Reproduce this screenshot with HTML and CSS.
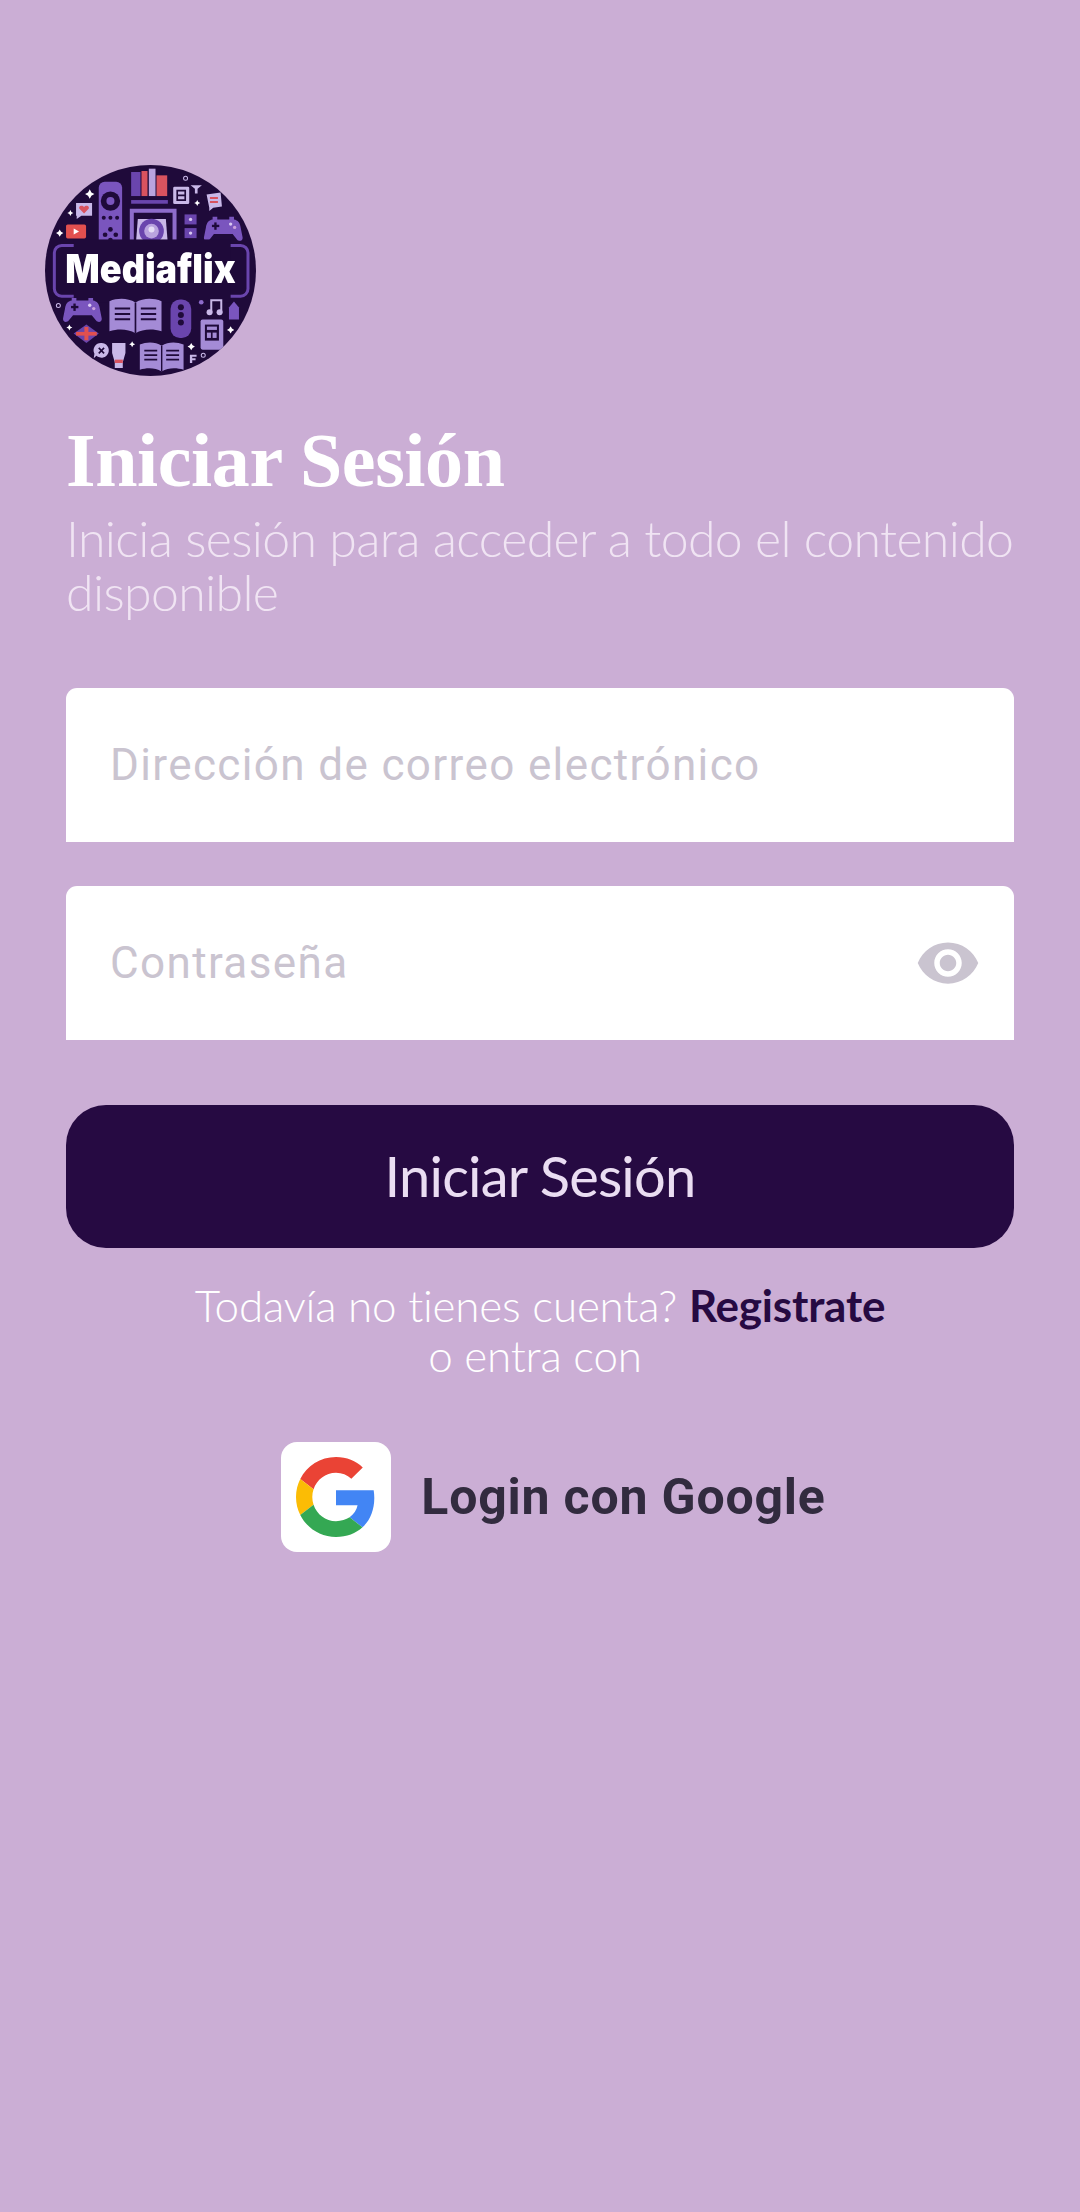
FILE: index.html
```html
<!DOCTYPE html>
<html lang="es">
<head>
  <meta charset="UTF-8" />
  <meta name="viewport" content="width=device-width, initial-scale=1.0"/>
  <title>Iniciar Sesión</title>
  <link rel="stylesheet" href="styles.css">
</head>
<body>

<main class="screen">
  <svg class="logo" viewBox="44 47 632 632" xmlns="http://www.w3.org/2000/svg" role="img" aria-label="Mediaflix">
    <defs>
      <clipPath id="disc"><circle cx="360" cy="363" r="316"/></clipPath>
      <g id="pad">
        <path d="M18 0h14v8h36V0h14v8c12 2 18 10 20 24l6 30c1 10-10 14-17 6L78 52H22L9 68c-7 8-18 4-17-6l6-30C0 18 6 10 18 8z" fill="#7a55be"/>
        <rect x="16" y="24" width="22" height="7" fill="#1f0a3a"/>
        <rect x="23" y="17" width="7" height="22" fill="#1f0a3a"/>
        <circle cx="72" cy="22" r="5" fill="#d9c9f2"/>
        <circle cx="84" cy="32" r="5" fill="#c9a0dc"/>
      </g>
      <g id="book">
        <path d="M0 8c25-10 55-10 78 4 23-14 53-14 78-4v90c-25-8-55-8-78 6-23-14-53-14-78-6z" fill="#a48bd6"/>
        <path d="M16 30h46M16 46h46M16 62h46M94 30h46M94 46h46M94 62h46" stroke="#1f0a3a" stroke-width="6" fill="none"/>
        <path d="M78 12v92" stroke="#1f0a3a" stroke-width="5"/>
      </g>
    </defs>
    <g clip-path="url(#disc)">
      <rect x="44" y="47" width="632" height="632" fill="#1f0a3a"/>

      <!-- fila de arriba -->
      <rect x="302" y="68" width="28" height="72" fill="#6a45ad"/>
      <rect x="333" y="65" width="18" height="75" fill="#d9535f"/>
      <rect x="355" y="58" width="20" height="82" fill="#b9a3de"/>
      <rect x="378" y="78" width="32" height="62" fill="#d9535f"/>
      <rect x="302" y="152" width="110" height="11" fill="#6a45ad"/>
      <rect x="428" y="112" width="48" height="52" rx="4" fill="#c9b8e8"/>
      <path d="M440 124h24v28h-24zM440 138h24" fill="none" stroke="#1f0a3a" stroke-width="5"/>
      <path d="M528 135l42-6 4 42-26 4-12 10v-10z" fill="#c9b8e8"/>
      <path d="M538 146h24M538 158h24" stroke="#d9535f" stroke-width="6"/>
      <circle cx="465" cy="87" r="6" fill="none" stroke="#c9b8e8" stroke-width="3"/>
      <path d="M480 108h34l-13 10v14h-8v-14z" fill="#c9b8e8"/>

      <!-- mando -->
      <rect x="205" y="97" width="70" height="196" rx="18" fill="#7a55be"/>
      <circle cx="240" cy="155" r="29" fill="#1f0a3a"/>
      <circle cx="240" cy="155" r="12" fill="#7a55be"/>
      <circle cx="220" cy="205" r="6" fill="#1f0a3a"/>
      <circle cx="240" cy="205" r="6" fill="#1f0a3a"/>
      <circle cx="260" cy="205" r="6" fill="#1f0a3a"/>
      <circle cx="240" cy="240" r="7" fill="#1f0a3a"/>
      <circle cx="240" cy="272" r="7" fill="#1f0a3a"/>
      <circle cx="224" cy="256" r="7" fill="#1f0a3a"/>
      <circle cx="256" cy="256" r="7" fill="#1f0a3a"/>

      <!-- proyector -->
      <path d="M298 285V178h140v107h-12V190H310v95z" fill="#8e6ccb"/>
      <path d="M316 285l6-76h84l6 76z" fill="#c9b8e8"/>
      <circle cx="363" cy="245" r="37" fill="#6a45ad"/>
      <circle cx="363" cy="245" r="22" fill="#b9a3de"/>
      <circle cx="363" cy="240" r="9" fill="#e4dcf5"/>

      <!-- iconos laterales -->
      <path d="M137 161h48v38h-32l-14 10v-10h-2z" fill="#c9b8e8"/>
      <path d="M161 192l-13-13c-6-8 7-15 13-6 6-9 19-2 13 6z" fill="#d9535f"/>
      <rect x="107" y="225" width="60" height="42" rx="5" fill="#e2504f"/>
      <path d="M130 237l16 9-16 9z" fill="#fff"/>
      <rect x="462" y="195" width="36" height="30" fill="#6a45ad"/>
      <rect x="462" y="236" width="36" height="30" fill="#6a45ad"/>
      <circle cx="480" cy="210" r="5" fill="#d9c9f2"/>
      <circle cx="480" cy="251" r="5" fill="#d9c9f2"/>
      <use href="#pad" transform="translate(528 202)"/>
      <path d="M178 120l5 9 9 5-9 5-5 9-5-9-9-5 9-5zM88 240l4 7 7 4-7 4-4 7-4-7-7-4 7-4zM120 182l3 6 6 3-6 3-3 6-3-6-6-3 6-3zM500 152l3 6 6 3-6 3-3 6-3-6-6-3 6-3z" fill="#fff"/>

      <!-- marco del nombre -->
      <rect x="72" y="288" width="580" height="152" rx="22" fill="#1f0a3a" stroke="#6a45ad" stroke-width="9"/>
      <rect x="130" y="270" width="470" height="190" fill="#1f0a3a"/>
      <text class="logo-name" x="105" y="401" textLength="510" lengthAdjust="spacingAndGlyphs">Mediaflix</text>

      <!-- fila de abajo -->
      <use href="#pad" transform="translate(106 445)"/>
      <use href="#book" transform="translate(237 447)"/>
      <rect x="420" y="450" width="62" height="115" rx="28" fill="#6a45ad"/>
      <circle cx="451" cy="473" r="9" fill="#1f0a3a"/>
      <circle cx="451" cy="496" r="9" fill="#1f0a3a"/>
      <circle cx="451" cy="519" r="9" fill="#1f0a3a"/>
      <path d="M542 488v-36h30v36" fill="none" stroke="#c9b8e8" stroke-width="6"/>
      <circle cx="537" cy="488" r="9" fill="#c9b8e8"/>
      <circle cx="567" cy="488" r="9" fill="#c9b8e8"/>
      <path d="M595 474l15-18 15 18v36h-30z" fill="#7a55be"/>
      <rect x="510" y="510" width="68" height="90" rx="6" fill="#a48bd6"/>
      <rect x="523" y="525" width="42" height="48" fill="#1f0a3a"/>
      <rect x="529" y="531" width="30" height="10" fill="#a48bd6"/>
      <rect x="529" y="549" width="12" height="16" fill="#a48bd6"/>
      <rect x="546" y="549" width="12" height="16" fill="#a48bd6"/>
      <path d="M130 552l38-27 37 27-37 28z" fill="#6a45ad"/>
      <rect x="137" y="547" width="62" height="11" fill="#e2504f"/>
      <rect x="162" y="532" width="12" height="40" fill="#e2504f"/>
      <path d="M213 580a22 22 0 1 1-15 38l-8 8 2-14a22 22 0 0 1 21-32z" fill="#c9b8e8"/>
      <path d="M205 595l16 16M221 595l-16 16" stroke="#1f0a3a" stroke-width="5"/>
      <path d="M245 580h40v30l-8 28v17h-24v-17l-8-28z" fill="#c9b8e8"/>
      <rect x="253" y="630" width="24" height="10" fill="#d9535f"/>
      <use href="#book" transform="translate(328 578) scale(.84 .84)"/>
      <path d="M478 615h20v6h-13v5h10v6h-10v8h-7z" fill="#c9b8e8"/>
      <path d="M600 530l4 7 7 4-7 4-4 7-4-7-7-4 7-4zM117 525l3 6 6 3-6 3-3 6-3-6-6-3 6-3zM482 580l4 7 7 4-7 4-4 7-4-7-7-4 7-4zM305 575l3 6 6 3-6 3-3 6-3-6-6-3 6-3z" fill="#fff"/>
      <circle cx="84" cy="468" r="6" fill="none" stroke="#c9b8e8" stroke-width="3"/>
      <circle cx="518" cy="617" r="6" fill="none" stroke="#c9b8e8" stroke-width="3"/>
      <circle cx="512" cy="458" r="7" fill="#8e6ccb"/>
    </g>
  </svg>

  <h1 class="title">Iniciar Sesión</h1>
  <p class="subtitle">Inicia sesión para acceder a todo el contenido disponible</p>

  <form class="login-form">
    <div class="field">
      <input type="email" placeholder="Dirección de correo electrónico">
    </div>
    <div class="field">
      <input type="password" placeholder="Contraseña">
      <svg class="eye" viewBox="0 0 24 24" xmlns="http://www.w3.org/2000/svg">
        <path d="M12 4.5C7 4.5 2.73 7.61 1 12c1.73 4.39 6 7.5 11 7.5s9.27-3.11 11-7.5c-1.73-4.39-6-7.5-11-7.5zM12 17c-2.76 0-5-2.24-5-5s2.24-5 5-5 5 2.24 5 5-2.24 5-5 5zm0-8c-1.66 0-3 1.34-3 3s1.34 3 3 3 3-1.34 3-3-1.34-3-3-3z"/>
      </svg>
    </div>
    <button type="button" class="submit-btn">Iniciar Sesión</button>
  </form>

  <p class="signup">Todavía no tienes cuenta? <a href="#">Registrate</a></p>
  <p class="signup signup-alt">o entra con</p>

  <div class="google-row">
    <span class="google-tile">
      <svg viewBox="0 0 48 48" xmlns="http://www.w3.org/2000/svg">
        <path fill="#EA4335" d="M24 9.5c3.54 0 6.71 1.22 9.21 3.6l6.85-6.85C35.9 2.38 30.47 0 24 0 14.62 0 6.51 5.38 2.56 13.22l7.98 6.19C12.43 13.72 17.74 9.5 24 9.5z"/>
        <path fill="#4285F4" d="M46.98 24.55c0-1.57-.15-3.09-.38-4.55H24v9.02h12.94c-.58 2.96-2.26 5.48-4.78 7.18l7.73 6c4.51-4.18 7.09-10.36 7.09-17.65z"/>
        <path fill="#FBBC05" d="M10.53 28.59c-.48-1.45-.76-2.99-.76-4.59s.27-3.14.76-4.59l-7.98-6.19C.92 16.46 0 20.12 0 24c0 3.88.92 7.54 2.56 10.78l7.97-6.19z"/>
        <path fill="#34A853" d="M24 48c6.48 0 11.93-2.13 15.89-5.81l-7.73-6c-2.15 1.45-4.92 2.3-8.16 2.3-6.26 0-11.57-4.22-13.47-9.91l-7.98 6.19C6.51 42.62 14.62 48 24 48z"/>
      </svg>
    </span>
    <span class="google-label">Login con Google</span>
  </div>
</main>

</body>
</html>
```

FILE: styles.css
```css
:root {
  --lila: #cbaed5;
  --morado: #260a42;
  --hint: #cac4d0;
}

* { box-sizing: border-box; }

body {
  margin: 0;
  background: var(--lila);
  min-height: 100vh;
}

.screen {
  padding: 165px 66px 0;
}

.logo {
  display: block;
  width: 211px;
  height: 211px;
  margin-left: -21px;
  filter: blur(.4px);
}

.logo-name {
  font-family: Inter, sans-serif;
  font-weight: 900;
  font-size: 118px;
  fill: #fff;
}

.title {
  margin: 44px 0 0;
  font-family: "Liberation Serif", serif;
  font-weight: 700;
  font-size: 76px;
  line-height: 80px;
  letter-spacing: -.4px;
  color: #fff;
}

.subtitle {
  margin: 11px 0 0;
  font-family: Lato, sans-serif;
  font-weight: 300;
  font-size: 50px;
  line-height: 54px;
  letter-spacing: -.65px;
  color: #f0e4f3;
}

.login-form {
  margin-top: 69px;
}

.field {
  display: flex;
  align-items: center;
  height: 154px;
  margin-bottom: 44px;
  padding: 0 33px 0 44px;
  background: #fff;
  border-radius: 11px 11px 0 0;
}

.field input {
  flex: 1;
  min-width: 0;
  border: none;
  outline: none;
  padding: 0;
  background: none;
  font-family: Roboto, sans-serif;
  font-size: 44px;
  letter-spacing: 1.375px;
}

.field input::placeholder {
  color: var(--hint);
  opacity: 1;
}

.eye {
  width: 66px;
  height: 66px;
  fill: var(--hint);
}

.submit-btn {
  display: block;
  width: 100%;
  height: 143px;
  margin-top: 65px;
  padding: 0 0 3px;
  border: none;
  border-radius: 40px;
  background: var(--morado);
  color: #eaddf2;
  font-family: Lato, sans-serif;
  font-size: 56px;
  letter-spacing: -.8px;
  cursor: pointer;
}

.signup {
  margin: 32px 0 0;
  text-align: center;
  font-family: Lato, sans-serif;
  font-weight: 300;
  font-size: 44px;
  line-height: 50px;
  letter-spacing: -.2px;
  color: #fff;
}

.signup a {
  color: var(--morado);
  font-weight: 700;
  text-decoration: none;
}

.signup-alt {
  margin-top: 0;
  padding-right: 10px;
}

.google-row {
  display: flex;
  justify-content: center;
  align-items: center;
  gap: 30px;
  margin-top: 62px;
  padding-left: 27px;
}

.google-tile {
  display: flex;
  justify-content: center;
  align-items: center;
  width: 110px;
  height: 110px;
  background: #fff;
  border-radius: 16px;
}

.google-tile svg {
  width: 80px;
  height: 80px;
}

.google-label {
  font-family: Roboto, sans-serif;
  font-weight: 700;
  font-size: 50px;
  letter-spacing: .8px;
  color: #322b3f;
}
```
